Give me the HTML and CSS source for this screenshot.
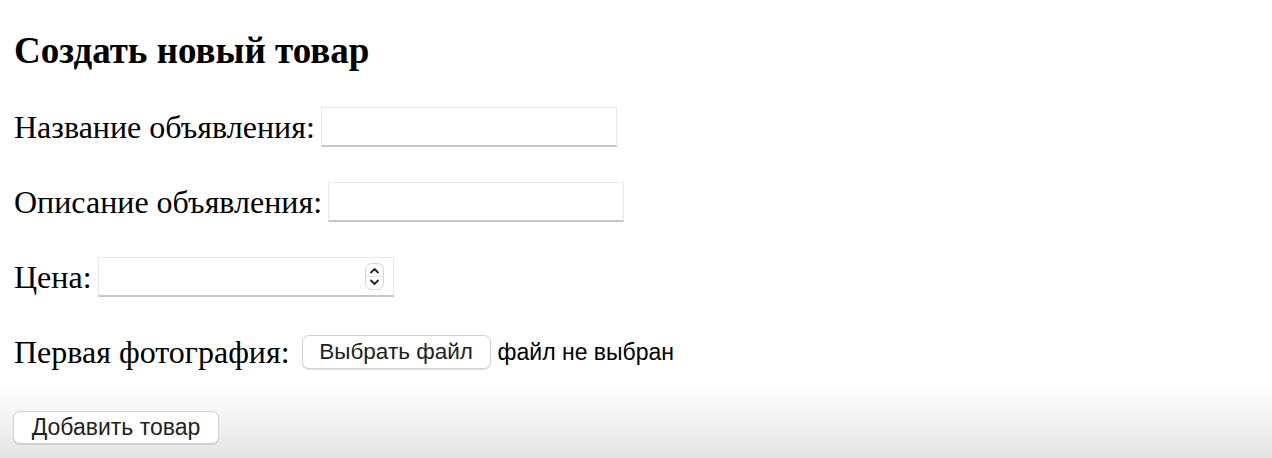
FILE: index.html
```html
<!DOCTYPE html>
<html lang="ru">
<head>
<meta charset="utf-8">
<title>Создать новый товар</title>
<link rel="stylesheet" href="styles.css">
</head>
<body>
<div class="page">
  <h2 class="title">Создать новый товар</h2>
  <form class="form">
    <div class="row">
      <label class="label" for="name">Название объявления:</label>
      <input class="field" id="name" type="text">
    </div>
    <div class="row">
      <label class="label" for="desc">Описание объявления:</label>
      <input class="field" id="desc" type="text">
    </div>
    <div class="row">
      <label class="label" for="price">Цена:</label>
      <div class="field number">
        <input class="number-input" id="price" type="text">
        <span class="spinner">
          <svg width="19" height="27" viewBox="0 0 19 27">
            <rect x="0.5" y="0.5" width="18" height="26" rx="6" fill="#fff" stroke="#d4d4d4"/>
            <line x1="1" y1="13.5" x2="18" y2="13.5" stroke="#e2e2e2"/>
            <path d="M6 9.5 L9.5 6 L13 9.5" fill="none" stroke="#222" stroke-width="1.8" stroke-linecap="round" stroke-linejoin="round"/>
            <path d="M6 17.5 L9.5 21 L13 17.5" fill="none" stroke="#222" stroke-width="1.8" stroke-linecap="round" stroke-linejoin="round"/>
          </svg>
        </span>
      </div>
    </div>
    <div class="row">
      <label class="label" for="photo">Первая фотография:</label>
      <span class="file">
        <button class="btn btn-file" type="button">Выбрать файл</button>
        <span class="file-status">файл не выбран</span>
      </span>
    </div>
    <div class="row submit-row">
      <button class="btn btn-submit" type="button">Добавить товар</button>
    </div>
  </form>
</div>
</body>
</html>
```
FILE: styles.css
```css
html {
  min-height: 100%;
  background: linear-gradient(to bottom, #ffffff 0, #ffffff 380px, #f6f6f6 410px, #e4e4e4 458px);
}
body {
  margin: 0;
  font-family: "Liberation Serif", "Times New Roman", serif;
  color: #000;
}
.page {
  padding: 0 12px;
}
.title {
  margin: 30px 0 0;
  font-size: 37px;
  line-height: 41px;
  font-weight: bold;
  padding-left: 2px;
}
.form {
  margin-top: 36px;
  display: flex;
  flex-direction: column;
  gap: 35px;
}
.row {
  display: flex;
  align-items: center;
  height: 40px;
  gap: 6px;
}
.label {
  font-size: 32px;
  line-height: 36px;
  padding-left: 2px;
}
.field {
  box-sizing: border-box;
  width: 296px;
  height: 40px;
  margin: 0;
  border: 1px solid #e8e8e8;
  border-bottom: 2px solid #c6c6c6;
  background: #fff;
  font-size: 20px;
  padding: 0 8px;
  outline: none;
}
.number {
  display: flex;
  align-items: center;
  padding: 0 9px 0 8px;
}
.number-input {
  flex: 1;
  min-width: 0;
  border: 0;
  outline: none;
  font-size: 20px;
  background: transparent;
}
.spinner {
  display: flex;
}
.file {
  display: flex;
  align-items: center;
  gap: 7px;
  margin-left: 6px;
}
.btn {
  box-sizing: border-box;
  height: 34px;
  padding: 0;
  border: 1px solid #d2d2d2;
  border-radius: 7px;
  background: #fff;
  box-shadow: 0 1px 1px rgba(0,0,0,0.12);
  font-family: "Liberation Sans", Arial, sans-serif;
  font-size: 22.5px;
  color: #222;
  cursor: default;
}
.btn-file {
  width: 189px;
}
.file-status {
  font-family: "Liberation Sans", Arial, sans-serif;
  font-size: 23px;
  color: #000;
}
.submit-row {
  margin-left: 1px;
}
.btn-submit {
  height: 33px;
  width: 206px;
  font-size: 23px;
}
```
